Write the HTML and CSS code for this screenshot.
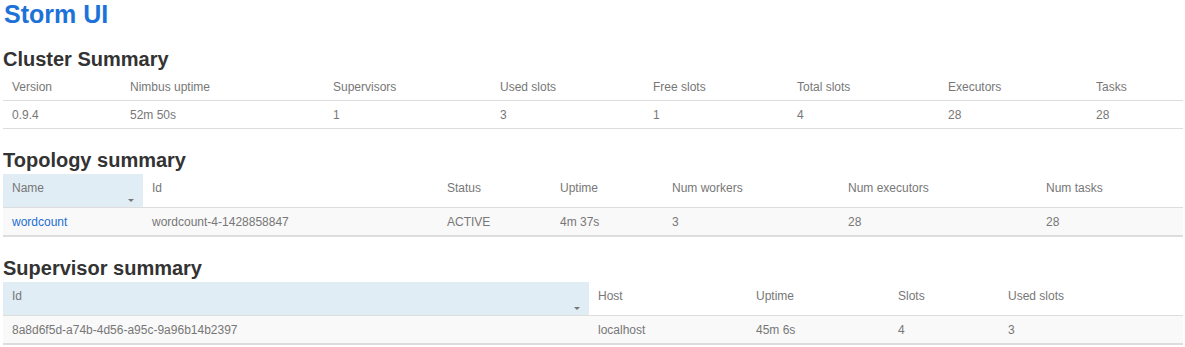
FILE: index.html
```html
<!DOCTYPE html>
<html lang="en">
<head>
  <meta charset="UTF-8" />
  <title>Storm UI</title>
  <link rel="stylesheet" href="styles.css">
</head>
<body>
  <h1 class="title">Storm UI</h1>

  <h2>Cluster Summary</h2>
  <table class="summary cluster">
    <colgroup>
      <col class="c1"><col class="c2"><col class="c3"><col class="c4">
      <col class="c5"><col class="c6"><col class="c7"><col class="c8">
    </colgroup>
    <thead>
      <tr>
        <th>Version</th>
        <th>Nimbus uptime</th>
        <th>Supervisors</th>
        <th>Used slots</th>
        <th>Free slots</th>
        <th>Total slots</th>
        <th>Executors</th>
        <th>Tasks</th>
      </tr>
    </thead>
    <tbody>
      <tr>
        <td>0.9.4</td>
        <td>52m 50s</td>
        <td>1</td>
        <td>3</td>
        <td>1</td>
        <td>4</td>
        <td>28</td>
        <td>28</td>
      </tr>
    </tbody>
  </table>

  <h2>Topology summary</h2>
  <table class="summary topology striped">
    <colgroup>
      <col class="c1"><col class="c2"><col class="c3"><col class="c4">
      <col class="c5"><col class="c6"><col class="c7">
    </colgroup>
    <thead>
      <tr>
        <th class="sorted"><div class="sort"><span>Name</span><i class="arrow"></i></div></th>
        <th>Id</th>
        <th>Status</th>
        <th>Uptime</th>
        <th>Num workers</th>
        <th>Num executors</th>
        <th>Num tasks</th>
      </tr>
    </thead>
    <tbody>
      <tr>
        <td><a href="#">wordcount</a></td>
        <td>wordcount-4-1428858847</td>
        <td>ACTIVE</td>
        <td>4m 37s</td>
        <td>3</td>
        <td>28</td>
        <td>28</td>
      </tr>
    </tbody>
  </table>

  <h2>Supervisor summary</h2>
  <table class="summary supervisor striped">
    <colgroup>
      <col class="c1"><col class="c2"><col class="c3"><col class="c4"><col class="c5">
    </colgroup>
    <thead>
      <tr>
        <th class="sorted"><div class="sort"><span>Id</span><i class="arrow"></i></div></th>
        <th>Host</th>
        <th>Uptime</th>
        <th>Slots</th>
        <th>Used slots</th>
      </tr>
    </thead>
    <tbody>
      <tr>
        <td>8a8d6f5d-a74b-4d56-a95c-9a96b14b2397</td>
        <td>localhost</td>
        <td>45m 6s</td>
        <td>4</td>
        <td>3</td>
      </tr>
    </tbody>
  </table>
</body>
</html>
```

FILE: styles.css
```css
body {
  margin: 0 2px 0 3px;
  font-family: "Liberation Sans", Arial, sans-serif;
  color: #333;
  background: #fff;
}

.title {
  margin: 0;
  font-size: 25px;
  line-height: 28px;
  color: #1c72d8;
  padding-left: 1px;
}

h2 {
  margin: 20px 0 2px;
  font-size: 20px;
  line-height: 23px;
  color: #333;
}

.summary {
  width: 100%;
  border-collapse: collapse;
  table-layout: fixed;
  font-size: 12px;
  line-height: 17px;
  color: #777;
}

.summary th {
  font-weight: normal;
  text-align: left;
  vertical-align: top;
  padding: 6px 9px 4px;
  border-bottom: 1px solid #ddd;
}

.summary td {
  padding: 6px 9px 4px;
  border-bottom: 1px solid #ddd;
  white-space: nowrap;
}

.striped tbody tr {
  background: #f9f9f9;
}

.striped tbody td {
  border-bottom: 2px solid #ddd;
}

.summary th.sorted {
  background: #e1edf5;
}

.sort {
  display: flex;
  flex-direction: column;
}

.arrow {
  align-self: flex-end;
  width: 0;
  height: 0;
  margin: 2px 0 1px;
  border-left: 3px solid transparent;
  border-right: 3px solid transparent;
  border-top: 3px solid #777;
}

.summary a {
  color: #1c6fd2;
  text-decoration: none;
}

/* column widths */
.cluster .c1 { width: 118px; }
.cluster .c2 { width: 203px; }
.cluster .c3 { width: 167px; }
.cluster .c4 { width: 153px; }
.cluster .c5 { width: 144px; }
.cluster .c6 { width: 151px; }
.cluster .c7 { width: 148px; }

.topology .c1 { width: 140px; }
.topology .c2 { width: 295px; }
.topology .c3 { width: 113px; }
.topology .c4 { width: 112px; }
.topology .c5 { width: 176px; }
.topology .c6 { width: 198px; }

.supervisor .c1 { width: 586px; }
.supervisor .c2 { width: 158px; }
.supervisor .c3 { width: 142px; }
.supervisor .c4 { width: 110px; }
```
